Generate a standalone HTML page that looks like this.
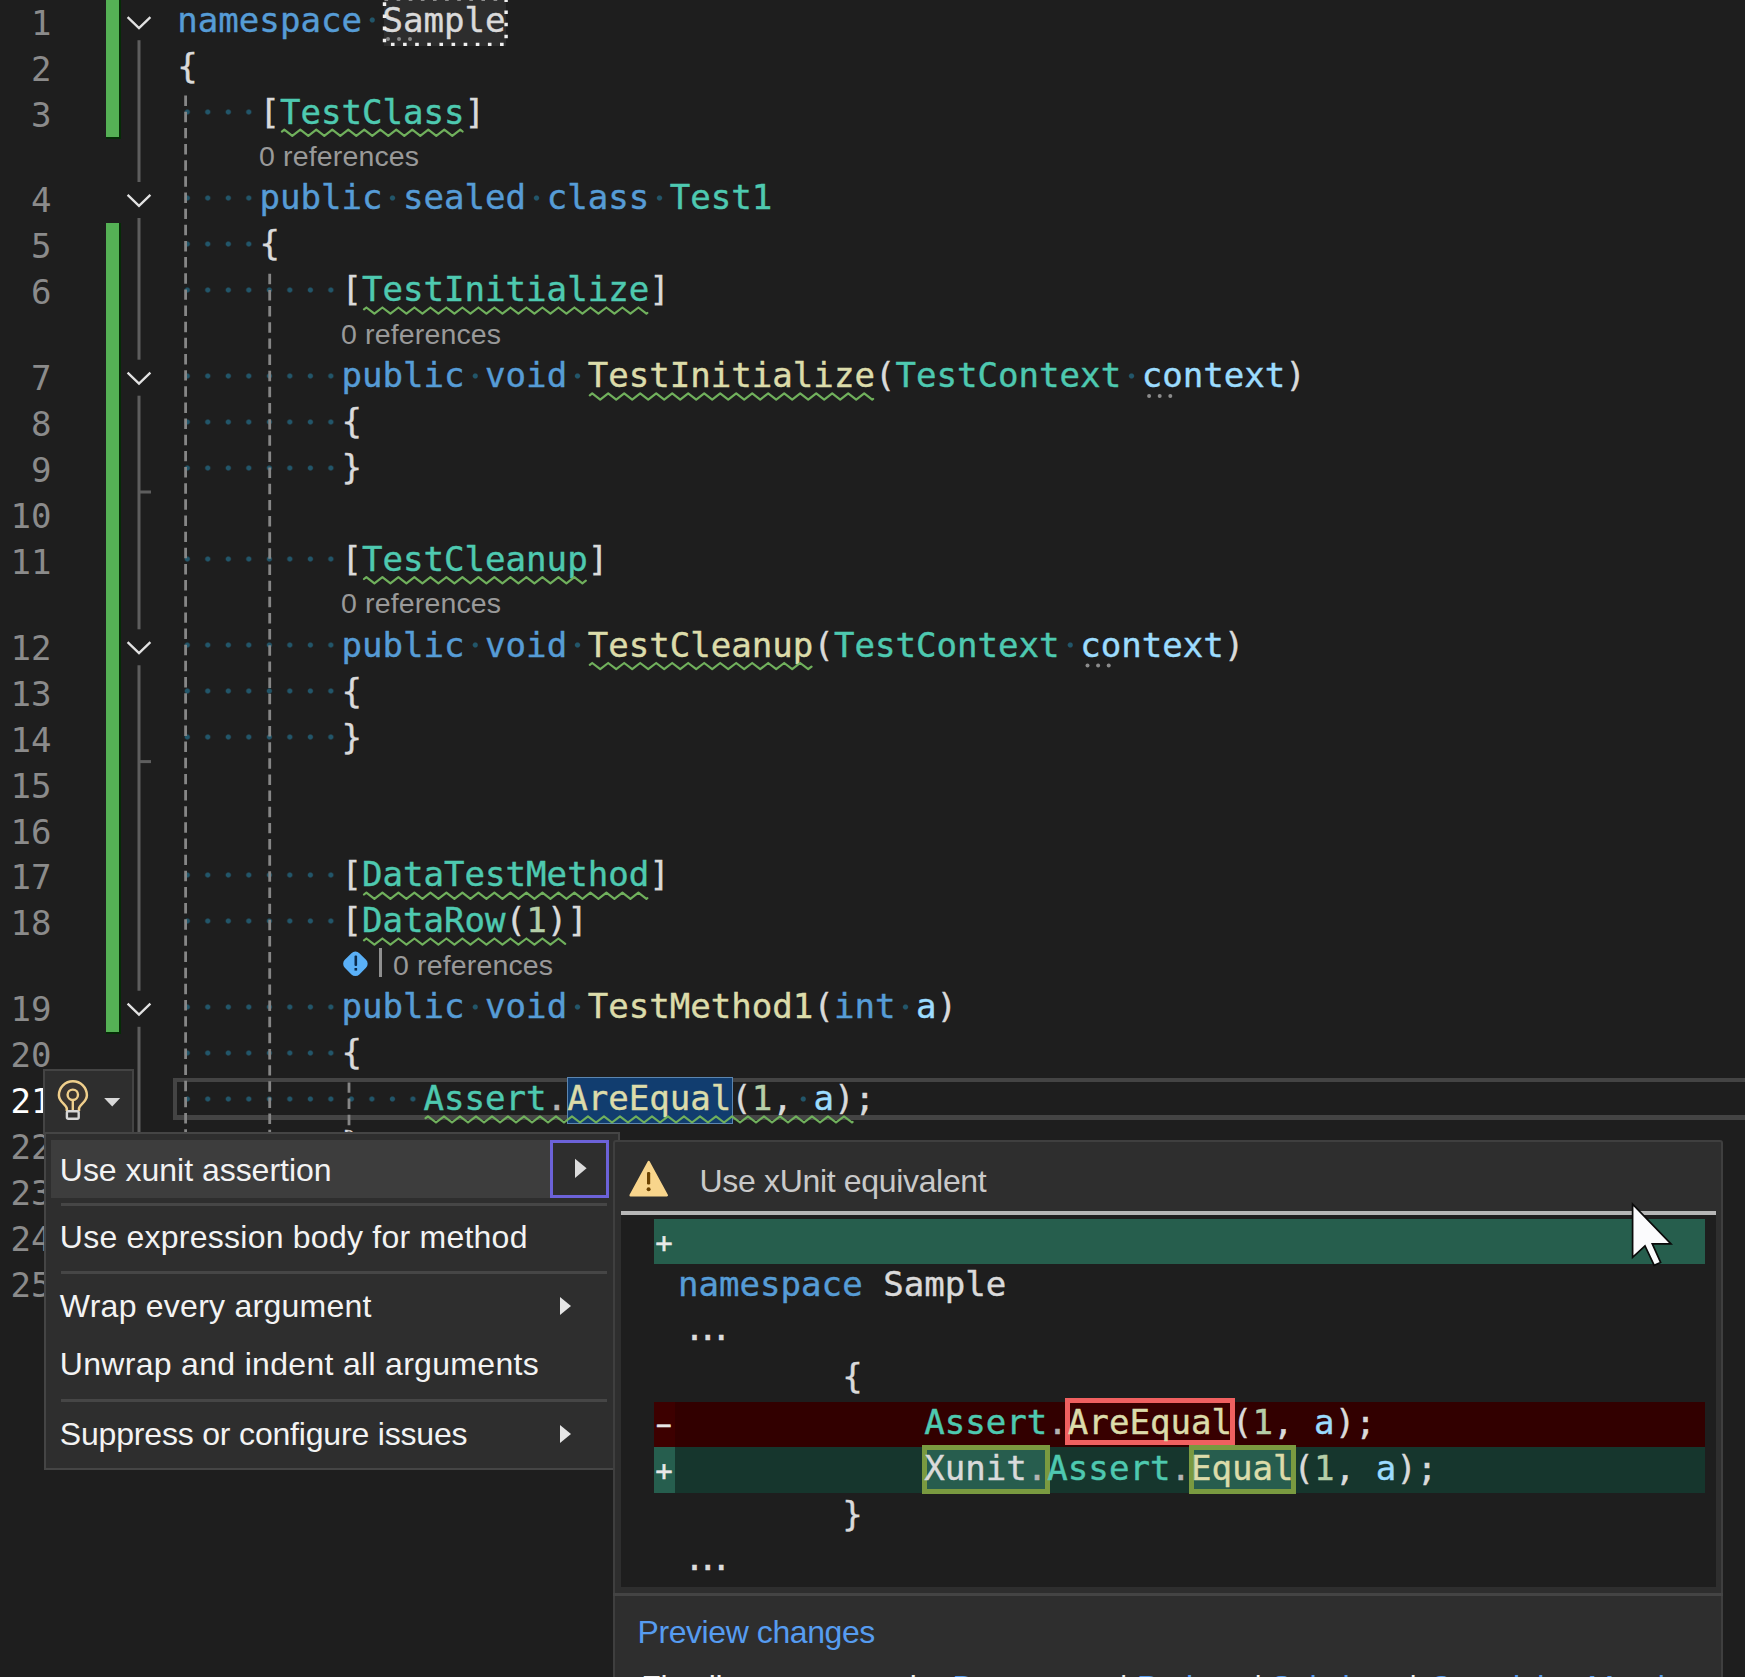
<!DOCTYPE html><html><head><meta charset="utf-8"><title>Editor</title><style>
html,body{margin:0;padding:0;background:#1e1e1e;}
body{width:1745px;height:1677px;overflow:hidden;position:relative;font-family:"Liberation Sans","DejaVu Sans",sans-serif;}
.abs,.cl,.lnno,.lens,.mi,.pv,.tx{position:absolute;white-space:pre;}
.cl,.lnno,.pv{font-family:"DejaVu Sans Mono","Liberation Mono",monospace;font-size:34.09px;line-height:45.92px;height:45.92px;}
.cl,.pv{-webkit-text-stroke:0.42px}
.lnno{color:#8b8b8b;left:0;width:51.5px;text-align:right;}
.kw{color:#569cd6}.ty{color:#4ec9b0}.fn{color:#dcdcaa}.pl{color:#dadada}.pa{color:#9cdcfe}.nu{color:#b5cea8}.op{color:#b4b4b4}.el{color:#dcdcdc;letter-spacing:-7.1px;position:relative;left:6.2px;top:-1.5px}
.ws{background-image:radial-gradient(circle at 50% 50%,#22566a 0,#22566a 2.0px,transparent 3.1px);background-size:20.523px 10px;background-repeat:repeat-x;background-position:0 15.6px}
.lens{font-family:"Liberation Sans","DejaVu Sans",sans-serif;font-size:28.5px;color:#999;letter-spacing:0.15px;line-height:40px;height:40px;}
.mi{font-family:"Liberation Sans","DejaVu Sans",sans-serif;font-size:32px;color:#f3f3f3;line-height:40px;height:40px;left:59.8px;}
.sep{position:absolute;left:61px;width:546px;height:3px;background:#464646;}
.tx{font-family:"Liberation Sans","DejaVu Sans",sans-serif;font-size:32px;line-height:40px;height:40px;}
svg{position:absolute;left:0;top:0;overflow:visible}

</style></head><body>
<div class="abs" style="left:105.9px;width:13.2px;top:0.0px;height:137.0px;background:#55b155;border-right:2.3px solid #052c06;border-bottom:2.4px solid #052c06"></div>
<div class="abs" style="left:105.9px;width:13.2px;top:222.9px;height:808.8px;background:#55b155;border-right:2.3px solid #052c06;border-bottom:2.4px solid #052c06"></div>
<div class="abs" style="left:384.0px;top:-2px;width:122.1px;height:48px;background:#2d2d2d"></div>
<div class="abs" style="left:173.4px;top:1077.7px;width:1600px;height:33px;border:solid #444;border-width:4.5px 0 5px 4px"></div>
<div class="abs" style="left:567px;top:1077px;width:163.5px;height:45px;background:#113d6f;border:1px solid #5c86b0"></div>
<div class="lnno" style="top:0.70px;">1</div>
<div class="lnno" style="top:46.62px;">2</div>
<div class="lnno" style="top:92.54px;">3</div>
<div class="lnno" style="top:178.46px;">4</div>
<div class="lnno" style="top:224.38px;">5</div>
<div class="lnno" style="top:270.30px;">6</div>
<div class="lnno" style="top:356.22px;">7</div>
<div class="lnno" style="top:402.14px;">8</div>
<div class="lnno" style="top:448.06px;">9</div>
<div class="lnno" style="top:493.98px;">10</div>
<div class="lnno" style="top:539.90px;">11</div>
<div class="lnno" style="top:625.82px;">12</div>
<div class="lnno" style="top:671.74px;">13</div>
<div class="lnno" style="top:717.66px;">14</div>
<div class="lnno" style="top:763.58px;">15</div>
<div class="lnno" style="top:809.50px;">16</div>
<div class="lnno" style="top:855.42px;">17</div>
<div class="lnno" style="top:901.34px;">18</div>
<div class="lnno" style="top:987.26px;">19</div>
<div class="lnno" style="top:1033.18px;">20</div>
<div class="lnno" style="top:1079.10px;color:#ffffff;">21</div>
<div class="lnno" style="top:1125.02px;">22</div>
<div class="lnno" style="top:1170.94px;">23</div>
<div class="lnno" style="top:1216.86px;">24</div>
<div class="lnno" style="top:1262.78px;">25</div>
<div class="cl" style="left:177.3px;top:-2.30px"><span class="kw">namespace</span><span class="ws"> </span><span class="pl">Sample</span></div>
<div class="cl" style="left:177.3px;top:43.62px"><span class="pl">{</span></div>
<div class="cl" style="left:177.3px;top:89.54px"><span class="ws">    </span><span class="pl">[</span><span class="ty">TestClass</span><span class="pl">]</span></div>
<div class="cl" style="left:177.3px;top:175.46px"><span class="ws">    </span><span class="kw">public</span><span class="ws"> </span><span class="kw">sealed</span><span class="ws"> </span><span class="kw">class</span><span class="ws"> </span><span class="ty">Test1</span></div>
<div class="cl" style="left:177.3px;top:221.38px"><span class="ws">    </span><span class="pl">{</span></div>
<div class="cl" style="left:177.3px;top:267.30px"><span class="ws">        </span><span class="pl">[</span><span class="ty">TestInitialize</span><span class="pl">]</span></div>
<div class="cl" style="left:177.3px;top:353.22px"><span class="ws">        </span><span class="kw">public</span><span class="ws"> </span><span class="kw">void</span><span class="ws"> </span><span class="fn">TestInitialize</span><span class="pl">(</span><span class="ty">TestContext</span><span class="ws"> </span><span class="pa">context</span><span class="pl">)</span></div>
<div class="cl" style="left:177.3px;top:399.14px"><span class="ws">        </span><span class="pl">{</span></div>
<div class="cl" style="left:177.3px;top:445.06px"><span class="ws">        </span><span class="pl">}</span></div>
<div class="cl" style="left:177.3px;top:536.90px"><span class="ws">        </span><span class="pl">[</span><span class="ty">TestCleanup</span><span class="pl">]</span></div>
<div class="cl" style="left:177.3px;top:622.82px"><span class="ws">        </span><span class="kw">public</span><span class="ws"> </span><span class="kw">void</span><span class="ws"> </span><span class="fn">TestCleanup</span><span class="pl">(</span><span class="ty">TestContext</span><span class="ws"> </span><span class="pa">context</span><span class="pl">)</span></div>
<div class="cl" style="left:177.3px;top:668.74px"><span class="ws">        </span><span class="pl">{</span></div>
<div class="cl" style="left:177.3px;top:714.66px"><span class="ws">        </span><span class="pl">}</span></div>
<div class="cl" style="left:177.3px;top:852.42px"><span class="ws">        </span><span class="pl">[</span><span class="ty">DataTestMethod</span><span class="pl">]</span></div>
<div class="cl" style="left:177.3px;top:898.34px"><span class="ws">        </span><span class="pl">[</span><span class="ty">DataRow</span><span class="pl">(</span><span class="nu">1</span><span class="pl">)]</span></div>
<div class="cl" style="left:177.3px;top:984.26px"><span class="ws">        </span><span class="kw">public</span><span class="ws"> </span><span class="kw">void</span><span class="ws"> </span><span class="fn">TestMethod1</span><span class="pl">(</span><span class="kw">int</span><span class="ws"> </span><span class="pa">a</span><span class="pl">)</span></div>
<div class="cl" style="left:177.3px;top:1030.18px"><span class="ws">        </span><span class="pl">{</span></div>
<div class="cl" style="left:177.3px;top:1076.10px"><span class="ws">            </span><span class="ty">Assert</span><span class="op">.</span><span class="fn">AreEqual</span><span class="pl">(</span><span class="nu">1</span><span class="pl">,</span><span class="ws"> </span><span class="pa">a</span><span class="pl">);</span></div>
<div class="cl" style="left:177.3px;top:1122.02px"><span class="ws">        </span><span class="pl">}</span></div>
<div class="lens" style="left:259.0px;top:135.96px">0 references</div>
<div class="lens" style="left:341.0px;top:313.72px">0 references</div>
<div class="lens" style="left:341.0px;top:583.32px">0 references</div>
<div class="lens" style="left:393.0px;top:944.76px">0 references</div>
<div class="abs" style="left:379px;top:948px;width:3.3px;height:29px;background:#8f8f8f"></div>
<svg width="1745" height="1677" viewBox="0 0 1745 1677">
<path d="M127.6 17.1 L139 28.1 L150.4 17.1" fill="none" stroke="#e2e2e2" stroke-width="2.3"/>
<path d="M127.6 194.9 L139 205.9 L150.4 194.9" fill="none" stroke="#e2e2e2" stroke-width="2.3"/>
<path d="M127.6 372.6 L139 383.6 L150.4 372.6" fill="none" stroke="#e2e2e2" stroke-width="2.3"/>
<path d="M127.6 642.2 L139 653.2 L150.4 642.2" fill="none" stroke="#e2e2e2" stroke-width="2.3"/>
<path d="M127.6 1003.7 L139 1014.7 L150.4 1003.7" fill="none" stroke="#e2e2e2" stroke-width="2.3"/>
<line x1="139" y1="40.2" x2="139" y2="182.0" stroke="#5e5e5e" stroke-width="3"/>
<line x1="139" y1="218.0" x2="139" y2="359.7" stroke="#5e5e5e" stroke-width="3"/>
<line x1="139" y1="395.7" x2="139" y2="629.3" stroke="#5e5e5e" stroke-width="3"/>
<line x1="139" y1="665.3" x2="139" y2="990.8" stroke="#5e5e5e" stroke-width="3"/>
<line x1="139" y1="1026.8" x2="139" y2="1133.0" stroke="#5e5e5e" stroke-width="3"/>
<line x1="139" y1="492.0" x2="151" y2="492.0" stroke="#5e5e5e" stroke-width="3"/>
<line x1="139" y1="761.6" x2="151" y2="761.6" stroke="#5e5e5e" stroke-width="3"/>
<line x1="185.6" y1="95.6" x2="185.6" y2="1133.0" stroke="#868686" stroke-width="2.8" stroke-dasharray="10.45 5.7"/>
<line x1="269.7" y1="273.8" x2="269.7" y2="1133.0" stroke="#868686" stroke-width="2.8" stroke-dasharray="10.45 5.7"/>
<line x1="349.0" y1="1082.4" x2="349.0" y2="1133.0" stroke="#868686" stroke-width="2.8" stroke-dasharray="10.45 5.7"/>
<path d="M281.9 131.6 L284.3 129.7 L292.3 135.9 L300.3 129.7 L308.3 135.9 L316.3 129.7 L324.3 135.9 L332.3 129.7 L340.3 135.9 L348.3 129.7 L356.3 135.9 L364.3 129.7 L372.3 135.9 L380.3 129.7 L388.3 135.9 L396.3 129.7 L404.3 135.9 L412.3 129.7 L420.3 135.9 L428.3 129.7 L436.3 135.9 L444.3 129.7 L452.3 135.9 L460.3 129.7 L462.6 131.5" fill="none" stroke="#70b05c" stroke-width="2.2" stroke-linejoin="round" stroke-linecap="round"/>
<path d="M364.0 309.4 L366.4 307.5 L374.4 313.7 L382.4 307.5 L390.4 313.7 L398.4 307.5 L406.4 313.7 L414.4 307.5 L422.4 313.7 L430.4 307.5 L438.4 313.7 L446.4 307.5 L454.4 313.7 L462.4 307.5 L470.4 313.7 L478.4 307.5 L486.4 313.7 L494.4 307.5 L502.4 313.7 L510.4 307.5 L518.4 313.7 L526.4 307.5 L534.4 313.7 L542.4 307.5 L550.4 313.7 L558.4 307.5 L566.4 313.7 L574.4 307.5 L582.4 313.7 L590.4 307.5 L598.4 313.7 L606.4 307.5 L614.4 313.7 L622.4 307.5 L630.4 313.7 L638.4 307.5 L646.4 313.7 L647.3 313.0" fill="none" stroke="#70b05c" stroke-width="2.2" stroke-linejoin="round" stroke-linecap="round"/>
<path d="M589.8 395.3 L592.2 393.4 L600.2 399.6 L608.2 393.4 L616.2 399.6 L624.2 393.4 L632.2 399.6 L640.2 393.4 L648.2 399.6 L656.2 393.4 L664.2 399.6 L672.2 393.4 L680.2 399.6 L688.2 393.4 L696.2 399.6 L704.2 393.4 L712.2 399.6 L720.2 393.4 L728.2 399.6 L736.2 393.4 L744.2 399.6 L752.2 393.4 L760.2 399.6 L768.2 393.4 L776.2 399.6 L784.2 393.4 L792.2 399.6 L800.2 393.4 L808.2 399.6 L816.2 393.4 L824.2 399.6 L832.2 393.4 L840.2 399.6 L848.2 393.4 L856.2 399.6 L864.2 393.4 L872.2 399.6 L873.1 398.9" fill="none" stroke="#70b05c" stroke-width="2.2" stroke-linejoin="round" stroke-linecap="round"/>
<path d="M364.0 579.0 L366.4 577.1 L374.4 583.3 L382.4 577.1 L390.4 583.3 L398.4 577.1 L406.4 583.3 L414.4 577.1 L422.4 583.3 L430.4 577.1 L438.4 583.3 L446.4 577.1 L454.4 583.3 L462.4 577.1 L470.4 583.3 L478.4 577.1 L486.4 583.3 L494.4 577.1 L502.4 583.3 L510.4 577.1 L518.4 583.3 L526.4 577.1 L534.4 583.3 L542.4 577.1 L550.4 583.3 L558.4 577.1 L566.4 583.3 L574.4 577.1 L582.4 583.3 L585.8 580.7" fill="none" stroke="#70b05c" stroke-width="2.2" stroke-linejoin="round" stroke-linecap="round"/>
<path d="M589.8 664.9 L592.2 663.0 L600.2 669.2 L608.2 663.0 L616.2 669.2 L624.2 663.0 L632.2 669.2 L640.2 663.0 L648.2 669.2 L656.2 663.0 L664.2 669.2 L672.2 663.0 L680.2 669.2 L688.2 663.0 L696.2 669.2 L704.2 663.0 L712.2 669.2 L720.2 663.0 L728.2 669.2 L736.2 663.0 L744.2 669.2 L752.2 663.0 L760.2 669.2 L768.2 663.0 L776.2 669.2 L784.2 663.0 L792.2 669.2 L800.2 663.0 L808.2 669.2 L811.5 666.6" fill="none" stroke="#70b05c" stroke-width="2.2" stroke-linejoin="round" stroke-linecap="round"/>
<path d="M364.0 894.5 L366.4 892.6 L374.4 898.8 L382.4 892.6 L390.4 898.8 L398.4 892.6 L406.4 898.8 L414.4 892.6 L422.4 898.8 L430.4 892.6 L438.4 898.8 L446.4 892.6 L454.4 898.8 L462.4 892.6 L470.4 898.8 L478.4 892.6 L486.4 898.8 L494.4 892.6 L502.4 898.8 L510.4 892.6 L518.4 898.8 L526.4 892.6 L534.4 898.8 L542.4 892.6 L550.4 898.8 L558.4 892.6 L566.4 898.8 L574.4 892.6 L582.4 898.8 L590.4 892.6 L598.4 898.8 L606.4 892.6 L614.4 898.8 L622.4 892.6 L630.4 898.8 L638.4 892.6 L646.4 898.8 L647.3 898.1" fill="none" stroke="#70b05c" stroke-width="2.2" stroke-linejoin="round" stroke-linecap="round"/>
<path d="M364.0 940.4 L366.4 938.5 L374.4 944.7 L382.4 938.5 L390.4 944.7 L398.4 938.5 L406.4 944.7 L414.4 938.5 L422.4 944.7 L430.4 938.5 L438.4 944.7 L446.4 938.5 L454.4 944.7 L462.4 938.5 L470.4 944.7 L478.4 938.5 L486.4 944.7 L494.4 938.5 L502.4 944.7 L510.4 938.5 L518.4 944.7 L526.4 938.5 L534.4 944.7 L542.4 938.5 L550.4 944.7 L558.4 938.5 L565.2 943.8" fill="none" stroke="#70b05c" stroke-width="2.2" stroke-linejoin="round" stroke-linecap="round"/>
<path d="M425.6 1118.2 L428.0 1116.3 L436.0 1122.5 L444.0 1116.3 L452.0 1122.5 L460.0 1116.3 L468.0 1122.5 L476.0 1116.3 L484.0 1122.5 L492.0 1116.3 L500.0 1122.5 L508.0 1116.3 L516.0 1122.5 L524.0 1116.3 L532.0 1122.5 L540.0 1116.3 L548.0 1122.5 L556.0 1116.3 L564.0 1122.5 L572.0 1116.3 L580.0 1122.5 L588.0 1116.3 L596.0 1122.5 L604.0 1116.3 L612.0 1122.5 L620.0 1116.3 L628.0 1122.5 L636.0 1116.3 L644.0 1122.5 L652.0 1116.3 L660.0 1122.5 L668.0 1116.3 L676.0 1122.5 L684.0 1116.3 L692.0 1122.5 L700.0 1116.3 L708.0 1122.5 L716.0 1116.3 L724.0 1122.5 L732.0 1116.3 L740.0 1122.5 L748.0 1116.3 L756.0 1122.5 L764.0 1116.3 L772.0 1122.5 L780.0 1116.3 L788.0 1122.5 L796.0 1116.3 L804.0 1122.5 L812.0 1116.3 L820.0 1122.5 L828.0 1116.3 L836.0 1122.5 L844.0 1116.3 L852.0 1122.5 L852.6 1122.0" fill="none" stroke="#70b05c" stroke-width="2.2" stroke-linejoin="round" stroke-linecap="round"/>
<circle cx="1149.1" cy="396.0" r="2.0" fill="#8c8c8c"/>
<circle cx="1159.7" cy="396.0" r="2.0" fill="#8c8c8c"/>
<circle cx="1170.3" cy="396.0" r="2.0" fill="#8c8c8c"/>
<circle cx="1087.5" cy="665.6" r="2.0" fill="#8c8c8c"/>
<circle cx="1098.1" cy="665.6" r="2.0" fill="#8c8c8c"/>
<circle cx="1108.7" cy="665.6" r="2.0" fill="#8c8c8c"/>
<rect x="384.5" y="-1.2" width="121.6" height="45.6" fill="none" stroke="#f0f0f0" stroke-width="3.4" stroke-dasharray="3.6 8.52"/>
<circle cx="388.0" cy="39.0" r="2.0" fill="#8a8a8a"/>
<circle cx="399.0" cy="39.0" r="2.0" fill="#8a8a8a"/>
<circle cx="410.0" cy="39.0" r="2.0" fill="#8a8a8a"/>
<rect x="345.1" y="953.5" width="20.6" height="20.6" rx="5.6" fill="#5ab0f7" transform="rotate(45 355.4 963.8)"/>
<rect x="354.5" y="955.4" width="2.6" height="10.6" rx="1" fill="#0b2b4c"/><rect x="354.5" y="968.0" width="2.6" height="2.6" fill="#0b2b4c"/>
</svg>
<div class="abs" style="left:42.8px;top:1068.8px;width:87.5px;height:62.5px;background:#2e2e2e;border:2px solid #444"></div>
<div class="abs" style="left:44px;top:1132px;width:572px;height:334px;background:#2e2e2e;border:2px solid #454545"></div>
<div class="abs" style="left:50.5px;top:1139.5px;width:500px;height:58px;background:#3d3d3d"></div>
<div class="abs" style="left:550px;top:1139.6px;width:53.4px;height:52.4px;background:#2e2e2e;border:3px solid #6c62d8"></div>
<div class="mi" style="top:1149.5px;letter-spacing:-0.02px">Use xunit assertion</div>
<div class="mi" style="top:1217.0px;letter-spacing:0.24px">Use expression body for method</div>
<div class="mi" style="top:1286.0px;letter-spacing:0.25px">Wrap every argument</div>
<div class="mi" style="top:1344.3px;letter-spacing:0.31px">Unwrap and indent all arguments</div>
<div class="mi" style="top:1414.0px;letter-spacing:-0.18px">Suppress or configure issues</div>
<div class="sep" style="top:1203.0px"></div>
<div class="sep" style="top:1271.0px"></div>
<div class="sep" style="top:1399.0px"></div>
<div class="abs" style="left:613px;top:1140px;width:1106px;height:560px;background:#2e2e2e;border:2px solid #3f3f3f;border-radius:3px"></div>
<div class="tx" style="left:699.5px;top:1161px;color:#c9c9c9;letter-spacing:-0.33px">Use xUnit equivalent</div>
<div class="abs" style="left:620.5px;top:1211.4px;width:1095px;height:3.3px;background:#b6b6b6"></div>
<div class="abs" style="left:620.5px;top:1215px;width:1095px;height:371.6px;background:#1e1e1e"></div>
<div class="abs" style="left:653.8px;top:1218.6px;width:1051.2px;height:45.2px;background:#265e4d"></div>
<div class="abs" style="left:653.8px;top:1401.6px;width:1051.2px;height:45.4px;background:#320000"></div>
<div class="abs" style="left:653.8px;top:1401.6px;width:21px;height:45.4px;background:#3d0000"></div>
<div class="abs" style="left:653.8px;top:1447px;width:1051.2px;height:46.3px;background:#16362d"></div>
<div class="abs" style="left:653.8px;top:1447px;width:21px;height:46.3px;background:#265e4e"></div>
<div class="abs" style="left:1065.4px;top:1398.0px;width:169.2px;height:47.4px;background:#380000;border:5px solid #f06060;box-sizing:border-box"></div>
<div class="abs" style="left:921.8px;top:1444.6px;width:128.1px;height:49.7px;background:#275d4e;border:5px solid #7a9a40;box-sizing:border-box"></div>
<div class="abs" style="left:1188.6px;top:1444.6px;width:107.6px;height:49.7px;background:#275d4e;border:5px solid #7a9a40;box-sizing:border-box"></div>
<div class="pv" style="left:678.0px;top:1261.92px"><span class="kw">namespace</span><span class="wn"> </span><span class="pl">Sample</span></div>
<div class="pv" style="left:678.0px;top:1307.84px"><span class="el">...</span></div>
<div class="pv" style="left:678.0px;top:1353.76px"><span class="wn">        </span><span class="pl">{</span></div>
<div class="pv" style="left:678.0px;top:1399.68px"><span class="wn">            </span><span class="ty">Assert</span><span class="op">.</span><span class="fn">AreEqual</span><span class="pl">(</span><span class="nu">1</span><span class="pl">,</span><span class="wn"> </span><span class="pa">a</span><span class="pl">);</span></div>
<div class="pv" style="left:678.0px;top:1445.60px"><span class="wn">            </span><span class="pl">Xunit</span><span class="op">.</span><span class="ty">Assert</span><span class="op">.</span><span class="fn">Equal</span><span class="pl">(</span><span class="nu">1</span><span class="pl">,</span><span class="wn"> </span><span class="pa">a</span><span class="pl">);</span></div>
<div class="pv" style="left:678.0px;top:1491.52px"><span class="wn">        </span><span class="pl">}</span></div>
<div class="pv" style="left:678.0px;top:1537.44px"><span class="el">...</span></div>
<div class="pv" style="left:655.3px;top:1220.70px;color:#e8e8e8;font-size:29px;-webkit-text-stroke:0.5px;">+</div>
<div class="pv" style="left:655.3px;top:1401.78px;color:#e8e8e8;font-size:29px;-webkit-text-stroke:0.5px;transform:scaleX(1.75);">-</div>
<div class="pv" style="left:655.3px;top:1448.70px;color:#e8e8e8;font-size:29px;-webkit-text-stroke:0.5px;">+</div>
<div class="tx" style="left:637.5px;top:1612px;color:#569cf0;letter-spacing:-0.42px">Preview changes</div>
<div class="tx" style="left:641.2px;top:1667.0px;color:#f0f0f0;letter-spacing:-0.35px">Fix all occurrences in:</div>
<div class="tx" style="left:952.5px;top:1667.0px;color:#569cf0;letter-spacing:-0.30px">Document</div>
<div class="tx" style="left:1119.4px;top:1667.0px;color:#f0f0f0;letter-spacing:0.00px">|</div>
<div class="tx" style="left:1137.0px;top:1667.0px;color:#569cf0;letter-spacing:-0.30px">Project</div>
<div class="tx" style="left:1254.0px;top:1667.0px;color:#f0f0f0;letter-spacing:0.00px">|</div>
<div class="tx" style="left:1271.0px;top:1667.0px;color:#569cf0;letter-spacing:-0.30px">Solution</div>
<div class="tx" style="left:1409.0px;top:1667.0px;color:#f0f0f0;letter-spacing:0.00px">|</div>
<div class="tx" style="left:1429.0px;top:1667.0px;color:#569cf0;letter-spacing:-0.30px">Containing Member</div>
<div class="abs" style="left:613px;top:1592.6px;width:1110px;height:3px;background:#444"></div>
<svg width="1745" height="1677" viewBox="0 0 1745 1677">
<path d="M66.8 1111 L66.8 1108.6 C66.8 1104.6 58.9 1102.2 58.9 1095.2 A14 14 0 0 1 86.9 1095.2 C86.9 1102.2 79 1104.6 79 1108.6 L79 1111" fill="#3a3431" stroke="#f0cf8c" stroke-width="2.5"/>
<circle cx="72.8" cy="1094.8" r="5.2" fill="none" stroke="#f0cf8c" stroke-width="2.4"/>
<line x1="72.8" y1="1099.6" x2="72.8" y2="1110.5" stroke="#f0cf8c" stroke-width="2.4"/>
<rect x="66.9" y="1111.3" width="11.8" height="7.4" rx="1.5" fill="#2e2e2e" stroke="#d6d6d6" stroke-width="2.4"/>
<path d="M104.2 1098 L120.2 1098 L112.2 1106.5 Z" fill="#d8d8d8"/>
<path d="M575 1158.7 L586.6 1168.3 L575 1177.9 Z" fill="#dcdcdc"/>
<path d="M560 1297.0 L571 1306.0 L560 1315.0 Z" fill="#e6e6e6"/>
<path d="M560 1425.0 L571 1434.0 L560 1443.0 Z" fill="#e6e6e6"/>
<path d="M648.7 1162 L666.8 1195.3 L630.6 1195.3 Z" fill="#f8d58c" stroke="#f8d58c" stroke-width="2.4" stroke-linejoin="round"/>
<rect x="647" y="1172" width="3.2" height="12.5" rx="1.2" fill="#6b4200"/><circle cx="648.6" cy="1189.3" r="2" fill="#6b4200"/>
<path d="M1632.6 1204.2 L1632.6 1257.3 L1645 1245.8 L1654.2 1265.3 L1660.6 1262.4 L1652.3 1243.9 L1671 1243.9 Z" fill="#fbfbfd" stroke="#0a0a0a" stroke-width="1.7" stroke-linejoin="miter"/>
</svg>
</body></html>
